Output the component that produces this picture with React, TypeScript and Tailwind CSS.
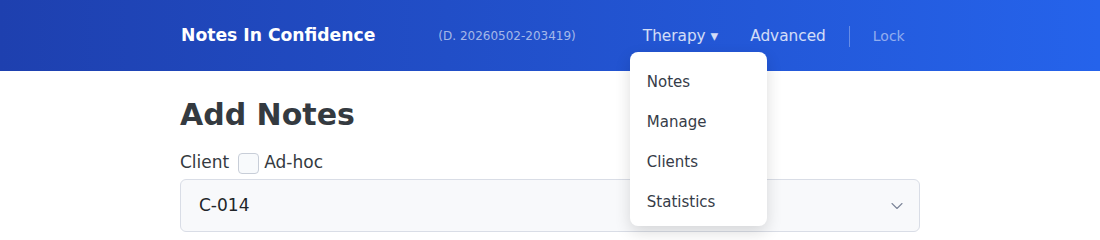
import { ChevronDown } from "lucide-react";

const menuItems = ["Notes", "Manage", "Clients", "Statistics"];

function Header() {
  return (
    <header className="h-[71px] bg-gradient-to-r from-[#1e40af] to-[#2563eb]">
      <div className="mx-auto flex h-full w-[740px] items-center pl-px pt-px">
        <span className="text-[17.2px] font-bold text-white">Notes In Confidence</span>
        <span className="ml-[63px] text-[12px] text-white/60">(D. 20260502-203419)</span>

        <nav className="ml-[67px] flex items-center">
          <div className="relative">
            <button type="button" className="text-[15.3px] text-white/80">
              Therapy ▾
            </button>
            {/* open dropdown */}
            <div className="absolute left-[-13px] top-[28px] z-10 w-[137px] rounded-lg bg-white pb-[4px] pt-[10px] shadow-[0_6px_16px_rgba(0,0,0,0.14)]">
              {menuItems.map((item) => (
                <div key={item} className="flex h-10 items-center px-[17px] text-[15px] text-[#363c48]">
                  {item}
                </div>
              ))}
            </div>
          </div>
          <button type="button" className="ml-[32px] text-[15.3px] text-white/80">
            Advanced
          </button>
          <div className="ml-[23px] h-[21px] w-px bg-white/30" />
          <button type="button" className="ml-[23px] text-[14px] text-white/50">
            Lock
          </button>
        </nav>
      </div>
    </header>
  );
}

export default function App() {
  return (
    <div className="min-h-[240px] bg-white font-['DejaVu_Sans',sans-serif]">
      <Header />
      <main className="mx-auto w-[740px] pt-[26px]">
        <h1 className="text-[30px] font-bold leading-[36px] text-[#343a40]">Add Notes</h1>

        <div className="mt-[18px] flex h-6 items-center text-[17px] text-[#343a40]">
          <span>Client</span>
          <span className="ml-[9px] h-[21px] w-[21px] rounded border border-[#c8ced8] bg-[#f8fafc]" />
          <span className="ml-[5px]">Ad-hoc</span>
        </div>

        <div className="mt-[4px] flex h-[53px] items-center justify-between rounded-md border border-[#d9dde6] bg-[#f8f9fb] pl-[18px] pr-[12px]">
          <span className="text-[17px] text-[#212529]">C-014</span>
          <ChevronDown className="h-5 w-5 text-[#7c8598]" strokeWidth={1.3} />
        </div>
      </main>
    </div>
  );
}
